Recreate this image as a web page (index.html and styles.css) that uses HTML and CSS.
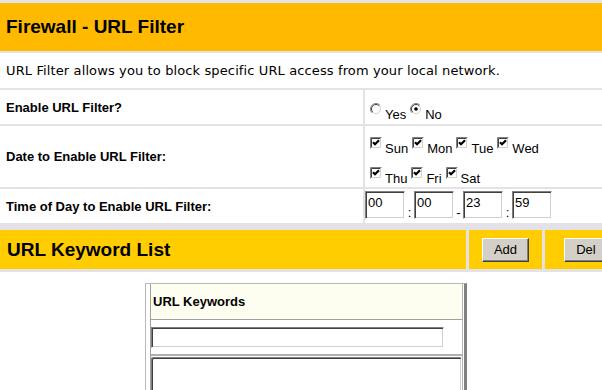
FILE: index.html
```html
<!DOCTYPE html>
<html lang="en">
<head>
    <meta charset="UTF-8">
    <title>Firewall - URL Filter</title>
    <link rel="stylesheet" href="styles.css">
</head>
<body>
    <!-- shared control glyphs -->
    <svg class="defs" width="0" height="0">
        <symbol id="cb-on" viewBox="0 0 12 12">
            <rect x="0" y="0" width="12" height="12" fill="#fff"/>
            <path d="M0.5 11.5V0.5H11.5" stroke="#808080" fill="none"/>
            <path d="M1.5 10.5V1.5H10.5" stroke="#404040" fill="none"/>
            <path d="M1.5 10.5H10.5V1.5" stroke="#d4d0c8" fill="none"/>
            <polyline points="3,5.2 5,7.2 9,3.2" stroke="#000" stroke-width="2.2" fill="none"/>
        </symbol>
        <symbol id="radio-off" viewBox="0 0 12 12">
            <circle cx="6" cy="6" r="5.5" fill="#fff"/>
            <path d="M2.1 9.9A5.5 5.5 0 0 1 9.9 2.1" stroke="#808080" fill="none"/>
            <path d="M2.8 9.2A4.5 4.5 0 0 1 9.2 2.8" stroke="#404040" fill="none"/>
            <path d="M2.8 9.2A4.5 4.5 0 0 0 9.2 2.8" stroke="#d4d0c8" fill="none"/>
        </symbol>
        <symbol id="radio-on" viewBox="0 0 12 12">
            <use href="#radio-off"/>
            <circle cx="6" cy="6" r="1.8" fill="#000"/>
        </symbol>
    </svg>

    <div class="page">
        <div class="settings">
            <div class="title-bar">Firewall - URL Filter</div>
            <div class="desc">URL Filter allows you to block specific URL access from your local network.</div>

            <div class="label">Enable URL Filter?</div>
            <div class="value radios">
                <div class="opt-line">
                    <label class="opt"><svg class="ctl"><use href="#radio-off"/></svg><span>Yes</span></label>
                    <label class="opt"><svg class="ctl"><use href="#radio-on"/></svg><span>No</span></label>
                </div>
            </div>

            <div class="label">Date to Enable URL Filter:</div>
            <div class="value days">
                <div class="opt-line">
                    <label class="opt"><svg class="ctl"><use href="#cb-on"/></svg><span>Sun</span></label>
                    <label class="opt"><svg class="ctl"><use href="#cb-on"/></svg><span>Mon</span></label>
                    <label class="opt"><svg class="ctl"><use href="#cb-on"/></svg><span>Tue</span></label>
                    <label class="opt"><svg class="ctl"><use href="#cb-on"/></svg><span>Wed</span></label>
                </div>
                <div class="opt-line">
                    <label class="opt"><svg class="ctl"><use href="#cb-on"/></svg><span>Thu</span></label>
                    <label class="opt"><svg class="ctl"><use href="#cb-on"/></svg><span>Fri</span></label>
                    <label class="opt"><svg class="ctl"><use href="#cb-on"/></svg><span>Sat</span></label>
                </div>
            </div>

            <div class="label">Time of Day to Enable URL Filter:</div>
            <div class="value times">
                <input class="time sunken" type="text" value="00">
                <span class="sep">:</span>
                <input class="time sunken" type="text" value="00">
                <span class="sep">-</span>
                <input class="time sunken" type="text" value="23">
                <span class="sep">:</span>
                <input class="time sunken" type="text" value="59">
            </div>
        </div>

        <div class="list-bar">
            <div class="list-title">URL Keyword List</div>
            <div class="list-btn"><button type="button">Add</button></div>
            <div class="list-btn"><button type="button">Del</button></div>
        </div>

        <div class="kw-box">
            <div class="kw-inner">
                <div class="kw-head">URL Keywords</div>
                <div class="kw-entry">
                    <input class="kw-input sunken" type="text">
                </div>
                <select class="kw-list sunken" size="6"></select>
            </div>
        </div>
    </div>
</body>
</html>
```

FILE: styles.css
```css
html, body {
    margin: 0;
    padding: 0;
    overflow: hidden;
}
body {
    font-family: "Liberation Sans", Arial, sans-serif;
    font-size: 13px;
    color: #000;
    background-color: #fff;
}
.defs {
    position: absolute;
    width: 0;
    height: 0;
}
.page {
    width: 627px;
}

/* top settings table */
.settings {
    display: grid;
    grid-template-columns: 363px 1fr;
    grid-template-rows: 48px 35px 34px 61px 34px;
    gap: 2px;
    padding: 3px 0 7px;
    background-color: #e4e2e6;
}
.title-bar {
    grid-column: 1 / -1;
    display: flex;
    align-items: center;
    padding-left: 6px;
    background-color: #ffba00;
    font-size: 19px;
    font-weight: bold;
}
.desc {
    grid-column: 1 / -1;
    display: flex;
    align-items: center;
    padding-left: 6px;
    background-color: #fff;
    font-family: "DejaVu Sans", Verdana, sans-serif;
    font-size: 13px;
    letter-spacing: 0.12px;
}
.label {
    display: flex;
    align-items: center;
    padding-left: 6px;
    background-color: #fff;
    font-weight: bold;
}
.value {
    background-color: #fff;
}
.radios {
    padding-top: 13px;
}
.days {
    display: flex;
    flex-direction: column;
    gap: 10px;
    padding-top: 11px;
}
.opt-line {
    display: flex;
    height: 20px;
}
.opt {
    display: flex;
    align-items: flex-start;
    margin-left: 4px;
}
.opt:first-child {
    margin-left: 5px;
}
.ctl {
    flex: none;
    width: 12px;
    height: 12px;
}
.opt span {
    margin: 5px 0 0 3px;
    line-height: 13px;
}
.times {
    display: flex;
    align-items: flex-start;
    padding-top: 2px;
}
.sunken {
    border: 1px solid;
    border-color: #808080 #fff #fff #808080;
    box-shadow: inset 1px 1px #404040, inset -1px -1px #d4d0c8;
    background-color: #fff;
    outline: none;
}
.time {
    box-sizing: border-box;
    width: 40px;
    height: 28px;
    margin: 0;
    padding: 0 0 6px 2px;
    font-family: "Liberation Sans", Arial, sans-serif;
    font-size: 13px;
}
.sep {
    width: 9px;
    margin-top: 15px;
    line-height: 13px;
    text-align: center;
}

/* keyword list bar */
.list-bar {
    display: grid;
    grid-template-columns: 466px 73px 82px;
    column-gap: 3px;
    height: 39px;
    padding-bottom: 3px;
    background-color: #e4e2e6;
}
.list-title {
    display: flex;
    align-items: center;
    padding-left: 7px;
    background-color: #ffcd00;
    font-size: 19px;
    font-weight: bold;
}
.list-btn {
    display: flex;
    align-items: center;
    justify-content: center;
    background-color: #ffcd00;
}
.list-btn button {
    height: 24px;
    padding: 0 11px;
    border: 1px solid;
    border-color: #fff #404040 #404040 #fff;
    box-shadow: inset -1px -1px #808080;
    background-color: #d4d0c8;
    color: #000;
    font-family: "Liberation Sans", Arial, sans-serif;
    font-size: 13px;
}

/* keyword box */
.kw-box {
    width: 313px;
    margin: 11px 0 0 145px;
    padding: 0 1px 0 4px;
    border-left: 1px solid #b8b8b8;
    border-top: 1px solid #b8b8b8;
    border-right: 3px solid #808080;
}
.kw-inner {
    border-left: 1px solid #a0a0a0;
    border-right: 1px solid #b4b4b4;
}
.kw-head {
    display: flex;
    align-items: center;
    height: 35px;
    padding-left: 2px;
    border-bottom: 1px solid #a0a0a0;
    background-color: #fefef0;
    font-weight: bold;
}
.kw-entry {
    padding: 7px 0 6px;
    border-bottom: 2px solid #b0b0b0;
}
.kw-input {
    display: block;
    box-sizing: border-box;
    width: 293px;
    height: 21px;
    margin: 0;
}
.kw-list {
    display: block;
    box-sizing: border-box;
    width: 100%;
    height: 80px;
    margin: 1px 0 0;
}
```
